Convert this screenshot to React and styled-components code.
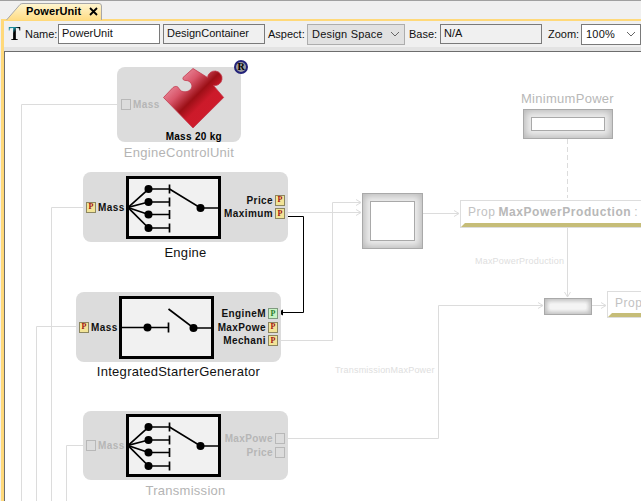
import React from 'react';
import styled, { createGlobalStyle } from 'styled-components';

const GlobalStyle = createGlobalStyle`
  html, body { margin: 0; padding: 0; background: #f0f0f0; }
  body { font-family: "Liberation Sans", Arial, sans-serif; }
`;

// canvas origin in page coordinates, nodes below are placed in page coordinates
const ORIGIN_X = 5;
const ORIGIN_Y = 52;

const Page = styled.div`
  width: 641px;
  height: 501px;
  overflow: hidden;
  display: flex;
  flex-direction: column;
  background: #f0f0f0;
  border-top: 1px solid #a0a0a0;
  box-sizing: border-box;
`;

const TabStrip = styled.div`
  height: 18px;
  padding: 2px 0 0 6px;
  box-sizing: border-box;
  flex: none;
`;

const Tab = styled.div`
  position: relative;
  width: 96px;
  height: 16px;
  display: flex;
  align-items: center;
  padding-left: 20px;
  gap: 8px;
  box-sizing: border-box;
  font-size: 11px;
  font-weight: bold;
  letter-spacing: 0.1px;
  color: #000;
`;

const TabShape = styled.svg`
  position: absolute;
  left: 0;
  top: 0;
`;

const TabText = styled.span`
  position: relative;
`;

const TabClose = styled.svg`
  position: relative;
  flex: none;
`;

const Frame = styled.div`
  flex: 1;
  display: flex;
  flex-direction: column;
  min-height: 0;
  border-top: 2px solid #ffd97a;
  border-left: 3px solid #ffd97a;
  margin-left: 1px;
`;

const Toolbar = styled.div`
  height: 26px;
  flex: none;
  display: flex;
  align-items: center;
  padding-left: 4px;
  font-size: 11px;
  color: #111;
`;

const ToolIcon = styled.span`
  width: 14px;
  margin-right: 4px;
  text-align: center;
  font: bold 18px/18px "Liberation Serif", serif;
  background: linear-gradient(135deg, #1a8a9a 0, #1a8a9a 30%, #000 45%);
  -webkit-background-clip: text;
  background-clip: text;
  color: transparent;
`;

const FieldLabel = styled.span`
  width: ${(p) => p.$w}px;
  margin-left: ${(p) => p.$lead ?? 0}px;
  flex: none;
  white-space: nowrap;
`;

const Field = styled.div`
  width: 102px;
  height: 20px;
  box-sizing: border-box;
  flex: none;
  margin-left: ${(p) => p.$lead ?? 0}px;
  border: 1px solid #7a7a7a;
  background: ${(p) => (p.$readOnly ? '#f0f0f0' : '#fff')};
  padding: 1px 2px 0 3px;
  line-height: 15px;
  white-space: nowrap;
`;

const Select = styled.div`
  width: ${(p) => p.$w}px;
  height: 21px;
  box-sizing: border-box;
  flex: none;
  display: flex;
  align-items: center;
  justify-content: space-between;
  padding: 0 4px;
  border: 1px solid ${(p) => (p.$flat ? '#adadad' : '#7a7a7a')};
  background: ${(p) => (p.$flat ? '#e1e1e1' : '#fff')};
  letter-spacing: 0.2px;
  white-space: nowrap;
`;

const Shelf = styled.div`
  height: 4px;
  flex: none;
  background: #e3e3e3;
  border-bottom: 1px solid #6d6d6d;
  box-shadow: 0 1px 0 #9a9a9a;
`;

const CanvasRow = styled.div`
  flex: 1;
  min-height: 0;
  border-left: 1px solid #6d6d6d;
`;

const Canvas = styled.div`
  position: relative;
  width: 100%;
  height: 100%;
  background: #fff;
  overflow: hidden;
`;

const Wires = styled.svg`
  position: absolute;
  left: 0;
  top: 0;
`;

const NodeSpot = styled.div`
  position: absolute;
  left: ${(p) => p.$x - ORIGIN_X}px;
  top: ${(p) => p.$y - ORIGIN_Y}px;
  width: ${(p) => p.$w}px;
  display: flex;
  flex-direction: column;
  align-items: center;
`;

const Block = styled.div`
  position: relative;
  width: 100%;
  height: ${(p) => p.$h}px;
  box-sizing: border-box;
  background: #dcdcdc;
  border-radius: 8px;
  display: grid;
  grid-template-columns: 43px 95px 67px;
  align-items: center;
`;

const EcuBlock = styled(Block)`
  display: flex;
  padding-left: 4px;
`;

const NodeLabel = styled.div`
  margin-top: ${(p) => p.$gap ?? 3}px;
  font-size: 13px;
  line-height: 16px;
  white-space: nowrap;
  letter-spacing: 0.28px;
  color: ${(p) => (p.$faded ? '#b4b4b4' : '#111')};
`;

const Ports = styled.div`
  display: flex;
  flex-direction: column;
  align-items: ${(p) => (p.$right ? 'flex-end' : 'flex-start')};
  gap: 3.5px;
  padding: ${(p) => (p.$right ? '0 3px 0 0' : '0 0 0 3px')};
`;

const PortRow = styled.div`
  display: flex;
  align-items: center;
  gap: 2px;
  height: 10px;
  font-size: 10px;
  font-weight: bold;
  letter-spacing: 0.4px;
  white-space: nowrap;
  color: ${(p) => (p.$faded ? '#b6b6b6' : '#111')};
`;

const PortBadge = styled.span`
  width: 10px;
  height: 11px;
  flex: none;
  box-sizing: border-box;
  display: flex;
  align-items: center;
  justify-content: center;
  border: 1px solid ${(p) => (p.$green ? '#7f9a7f' : '#8c8660')};
  background: ${(p) => (p.$green ? '#c9f3c4' : '#f2e497')};
  font: bold 8px/8px "Liberation Serif", serif;
  letter-spacing: 0;
  color: ${(p) => (p.$green ? '#2a7a2a' : '#a01010')};
`;

const EmptyPort = styled.span`
  width: 10px;
  height: 11px;
  flex: none;
  box-sizing: border-box;
  border: 1px solid #b8b8b8;
`;

const SchematicFrame = styled.div`
  width: 95px;
  height: 63px;
  box-sizing: border-box;
  border: 3px solid #000;
  background: #f1f1f1;
  line-height: 0;
`;

const EcuPuzzle = styled.svg`
  position: absolute;
  left: 46px;
  top: 1px;
`;

const EcuCaption = styled.span`
  position: absolute;
  right: 19px;
  bottom: -1px;
  font-size: 10px;
  line-height: 13px;
  font-weight: bold;
  letter-spacing: 0.3px;
  color: #000;
`;

const RefBadge = styled.span`
  position: absolute;
  right: -7px;
  top: -7px;
  width: 14px;
  height: 14px;
  box-sizing: border-box;
  border: 2px solid #23237a;
  border-radius: 50%;
  background: #9c9c9c;
  display: flex;
  align-items: center;
  justify-content: center;
  font: bold 10px/10px "Liberation Serif", serif;
  color: #000;
`;

const BevelBox = styled.div`
  position: absolute;
  left: ${(p) => p.$x - ORIGIN_X}px;
  top: ${(p) => p.$y - ORIGIN_Y}px;
  width: ${(p) => p.$w}px;
  height: ${(p) => p.$h}px;
  box-sizing: border-box;
  border: 1px solid #a9a9a9;
  background: #ececec;
  box-shadow: inset 0 0 ${(p) => p.$inset}px ${(p) => p.$inset / 4}px #b8b8b8;
  padding: ${(p) => p.$inset}px;
  display: flex;
`;

const BevelInner = styled.div`
  flex: 1;
  background: #fff;
  border: 1px solid #a9a9a9;
`;

const SlimInner = styled.div`
  flex: 1;
  background: #f4f4f4;
  box-shadow: 0 0 3px 1px #f4f4f4;
`;

const CanvasTitle = styled.div`
  position: absolute;
  left: ${(p) => p.$x - ORIGIN_X}px;
  top: ${(p) => p.$y - ORIGIN_Y}px;
  font-size: 13px;
  line-height: 16px;
  letter-spacing: 0.28px;
  color: #b8b8b8;
  white-space: nowrap;
`;

const WireLabel = styled.div`
  position: absolute;
  left: ${(p) => p.$x - ORIGIN_X}px;
  top: ${(p) => p.$y - ORIGIN_Y}px;
  font-size: 9px;
  line-height: 12px;
  letter-spacing: 0.2px;
  color: #dedede;
  white-space: nowrap;
`;

const PropBox = styled.div`
  position: absolute;
  left: ${(p) => p.$x - ORIGIN_X}px;
  top: ${(p) => p.$y - ORIGIN_Y}px;
  width: ${(p) => p.$w}px;
  height: ${(p) => p.$h}px;
  box-sizing: border-box;
  border: 1px solid #dddddd;
  border-right: 0;
  display: flex;
  flex-direction: column;
  background: #fff;
`;

const PropText = styled.div`
  flex: 1;
  display: flex;
  align-items: center;
  gap: 3px;
  padding-left: 7px;
  font-size: 12px;
  letter-spacing: 0.55px;
  color: #c2c2c2;
  white-space: nowrap;
  b {
    color: #b8b8b8;
  }
`;

const GoldBar = styled.div`
  height: 4px;
  flex: none;
  background: #c6bd78;
  clip-path: polygon(4px 0, 100% 0, 100% 100%, 0 100%);
`;

const Arrow = ({ x, y, dir = 'right', color = '#dcdcdc' }) => {
  const pts = dir === 'right'
    ? `${x - 5},${y - 3} ${x},${y} ${x - 5},${y + 3}`
    : `${x - 3},${y - 5} ${x},${y} ${x + 3},${y - 5}`;
  return <polyline points={pts} fill="none" stroke={color} strokeWidth="1" />;
};

const lightWires = [
  'M117.5 104.5H21.5V501',
  'M87 207.5H51.5V501',
  'M79 326.5H36.5V501',
  'M83 445.5H66.5V501',
  'M285 212.5H361',
  'M281 340.5H332.5V202.5H361',
  'M423 213.5H459',
  'M287 438.5H438.5V305.5H543',
  'M592 305.5H606',
  'M567.5 228V297',
];

// the diagram of a four way selector, as in Engine and Transmission
const SelectorDiagram = () => (
  <svg width="89" height="57" viewBox="0 0 89 57" fill="none" stroke="#000" strokeWidth="1.7">
    {[10, 23, 35.5, 49].map((y) => (
      <g key={y}>
        <path d={`M-1 28.5L19.5 ${y}H40.5`} />
        <circle cx="19.5" cy={y} r="4" fill="#000" stroke="none" />
        <path d={`M40.5 ${y - 4.5}V${y + 4.5}`} />
      </g>
    ))}
    <path d="M40.5 10L71.5 29H90" />
    <circle cx="71.5" cy="29" r="4" fill="#000" stroke="none" />
  </svg>
);

const SwitchDiagram = () => (
  <svg width="89" height="57" viewBox="0 0 89 57" fill="none" stroke="#000" strokeWidth="1.7">
    <path d="M-1 28.5H46.5M46.5 23.5V33.5" />
    <circle cx="25.5" cy="28.5" r="4" fill="#000" stroke="none" />
    <path d="M46.5 10L71.5 29H90" />
    <circle cx="71.5" cy="29" r="4" fill="#000" stroke="none" />
  </svg>
);

const PortList = ({ right, items, faded }) => (
  <Ports $right={right}>
    {items.map((item) => {
      const badge = faded
        ? <EmptyPort />
        : <PortBadge $green={item.green}>P</PortBadge>;
      return (
        <PortRow key={item.name} $faded={faded}>
          {!right && badge}
          {item.name}
          {right && badge}
        </PortRow>
      );
    })}
  </Ports>
);

const Component = ({ x, y, h, name, faded, labelGap, left, right, children }) => (
  <NodeSpot $x={x} $y={y} $w={205}>
    <Block $h={h}>
      <PortList items={left} faded={faded} />
      <SchematicFrame>{children}</SchematicFrame>
      <PortList right items={right} faded={faded} />
    </Block>
    <NodeLabel $faded={faded} $gap={labelGap}>{name}</NodeLabel>
  </NodeSpot>
);

const Chevron = () => (
  <svg width="10" height="6" viewBox="0 0 10 6"><path d="M1 1L5 5L9 1" fill="none" stroke="#666" /></svg>
);

const App = () => (
  <Page>
    <GlobalStyle />
    <TabStrip>
      <Tab>
        <TabShape width="96" height="17" viewBox="0 0 96 17">
          <defs>
            <linearGradient id="tabFill" x1="0" y1="0" x2="0" y2="1">
              <stop offset="0" stopColor="#fff6d2" />
              <stop offset="1" stopColor="#ffdc84" />
            </linearGradient>
          </defs>
          <path d="M0.5 17L14 1.5Q15 .5 17 .5H93Q95.5 .5 95.5 3V17" fill="url(#tabFill)" stroke="#a8a8a8" />
        </TabShape>
        <TabText>PowerUnit</TabText>
        <TabClose width="9" height="9" viewBox="0 0 9 9">
          <path d="M1 1L8 8M8 1L1 8" stroke="#000" strokeWidth="1.8" />
        </TabClose>
      </Tab>
    </TabStrip>
    <Frame>
      <Toolbar>
        <ToolIcon>T</ToolIcon>
        <FieldLabel $w={33}>Name:</FieldLabel>
        <Field>PowerUnit</Field>
        <Field $lead={3} $readOnly>DesignContainer</Field>
        <FieldLabel $lead={3} $w={39}>Aspect:</FieldLabel>
        <Select $w={98} $flat>
          Design Space
          <Chevron />
        </Select>
        <FieldLabel $lead={4} $w={31}>Base:</FieldLabel>
        <Field $readOnly>N/A</Field>
        <FieldLabel $lead={6} $w={33}>Zoom:</FieldLabel>
        <Select $w={60}>
          100%
          <Chevron />
        </Select>
      </Toolbar>
      <Shelf />
      <CanvasRow>
        <Canvas>
          <Wires width="636" height="449" viewBox={`${ORIGIN_X} ${ORIGIN_Y} 636 449`} fill="none">
            {lightWires.map((d) => <path key={d} d={d} stroke="#dcdcdc" />)}
            <path d="M567.5 139V198" stroke="#dcdcdc" strokeDasharray="5 3" />
            <Arrow x={361} y={212.5} />
            <Arrow x={361} y={202.5} />
            <Arrow x={459} y={213.5} />
            <Arrow x={543} y={305.5} />
            <Arrow x={606} y={305.5} />
            <Arrow x={567.5} y={297} dir="down" />
            <path d="M285 216.5H303.5V312.5H279" stroke="#000" />
            <path d="M277.5 312.5L283 309.5V315.5Z" fill="#000" />
          </Wires>

          <NodeSpot $x={117} $y={67} $w={124}>
            <EcuBlock $h={75}>
              <PortRow $faded><EmptyPort />Mass</PortRow>
              <EcuPuzzle width="62" height="61" viewBox="0 0 62 61">
                <defs>
                  <linearGradient id="puzzleFill" x1="0.1" y1="0.1" x2="0.9" y2="0.9">
                    <stop offset="0" stopColor="#f2a8b6" />
                    <stop offset="0.3" stopColor="#d9566a" />
                    <stop offset="0.5" stopColor="#9c0f16" />
                    <stop offset="0.65" stopColor="#cc1a2a" />
                    <stop offset="1" stopColor="#d01c2c" />
                  </linearGradient>
                </defs>
                <path
                  d="M30 0.5L44.5 9.5A7.3 7.3 0 1 1 50.5 17.5L60.7 29.5L30 60L0.5 29.5L10 19.5C13 17.5 15 18.5 16 20.5C18 25 26 25 28.5 20C30 16.5 27 12.5 23 12.5C20.5 12.5 19.5 11.5 20 9.5Z"
                  fill="url(#puzzleFill)"
                  stroke="#c13a4c"
                  strokeWidth="0.8"
                />
              </EcuPuzzle>
              <EcuCaption>Mass 20 kg</EcuCaption>
              <RefBadge>R</RefBadge>
            </EcuBlock>
            <NodeLabel $faded>EngineControlUnit</NodeLabel>
          </NodeSpot>

          <Component
            x={83}
            y={172}
            h={70}
            name="Engine"
            left={[{ name: 'Mass' }]}
            right={[{ name: 'Price' }, { name: 'Maximum' }]}
          >
            <SelectorDiagram />
          </Component>

          <Component
            x={76}
            y={292}
            h={70}
            labelGap={2}
            name="IntegratedStarterGenerator"
            left={[{ name: 'Mass' }]}
            right={[{ name: 'EngineM', green: true }, { name: 'MaxPowe' }, { name: 'Mechani' }]}
          >
            <SwitchDiagram />
          </Component>

          <Component
            x={83}
            y={411}
            h={69}
            name="Transmission"
            faded
            left={[{ name: 'Mass' }]}
            right={[{ name: 'MaxPowe' }, { name: 'Price' }]}
          >
            <SelectorDiagram />
          </Component>

          <CanvasTitle $x={521} $y={91}>MinimumPower</CanvasTitle>
          <BevelBox $x={523} $y={109} $w={90} $h={30} $inset={7}><BevelInner /></BevelBox>
          <BevelBox $x={362} $y={193} $w={61} $h={56} $inset={7}><BevelInner /></BevelBox>
          <BevelBox $x={544} $y={298} $w={48} $h={17} $inset={5}><SlimInner /></BevelBox>

          <PropBox $x={460} $y={200} $w={200} $h={28}>
            <PropText>Prop <b>MaxPowerProduction</b> :</PropText>
            <GoldBar />
          </PropBox>
          <PropBox $x={607} $y={291} $w={60} $h={27}>
            <PropText>Prop</PropText>
            <GoldBar />
          </PropBox>

          <WireLabel $x={475} $y={255}>MaxPowerProduction</WireLabel>
          <WireLabel $x={335} $y={364}>TransmissionMaxPower</WireLabel>
        </Canvas>
      </CanvasRow>
    </Frame>
  </Page>
);

export default App;
